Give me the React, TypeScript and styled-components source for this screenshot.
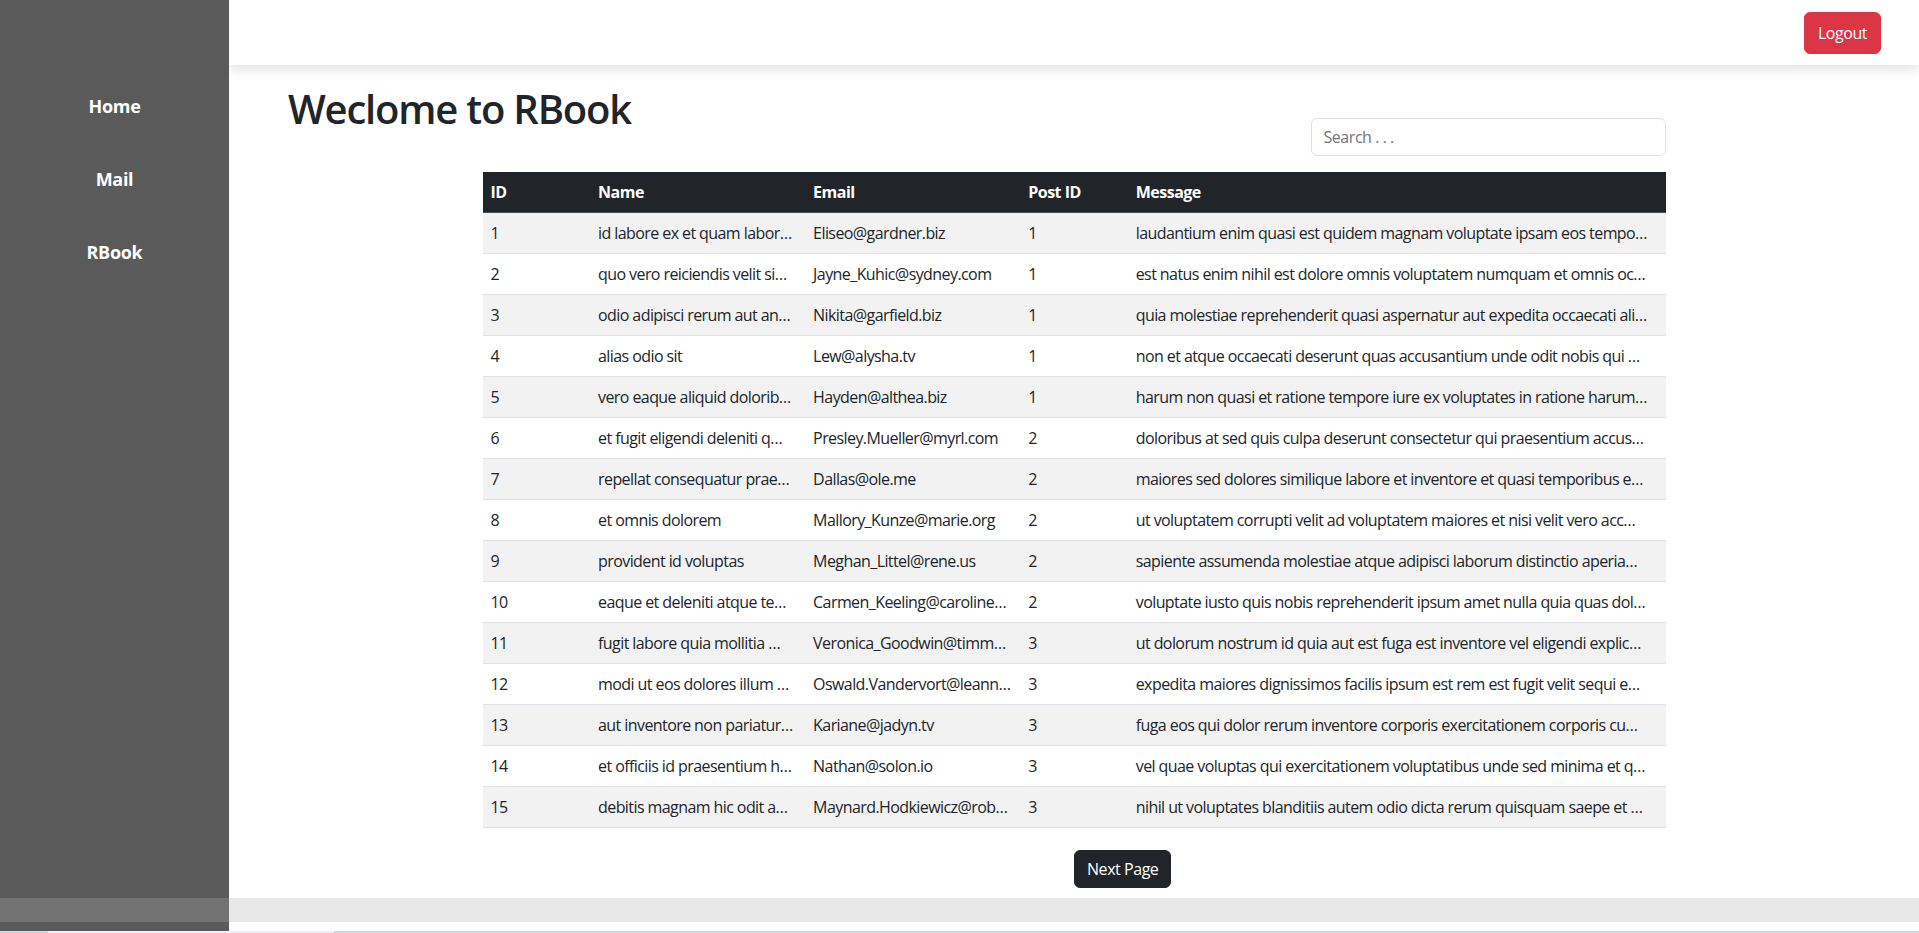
import React from "react";
import styled, { createGlobalStyle } from "styled-components";

const GlobalStyle = createGlobalStyle`
  html, body {
    margin: 0;
    padding: 0;
    height: 100%;
    overflow: hidden;
  }
  body {
    font-family: "Open Sans", "Noto Sans", sans-serif;
    font-size: 16px;
    line-height: 1.5;
    letter-spacing: -0.5px;
    color: #212529;
    background: #ffffff;
  }
  * {
    box-sizing: border-box;
  }
`;

const SIDEBAR = 229;

const Page = styled.div`
  display: flex;
  flex-direction: column;
  height: 933px;
`;

const Body = styled.div`
  display: flex;
  height: 898px;
`;

const Sidebar = styled.nav`
  width: ${SIDEBAR}px;
  flex-shrink: 0;
  background: #5a5a5a;
  display: flex;
  flex-direction: column;
  padding-top: 70px;
  position: relative;
  z-index: 2;
`;

const NavItem = styled.a`
  display: block;
  text-align: center;
  color: #ffffff;
  font-weight: 700;
  font-size: 18px;
  line-height: 25px;
  letter-spacing: -0.3px;
  padding: 24px 0;
  text-decoration: none;
  cursor: pointer;
`;

const Main = styled.main`
  flex: 1;
  display: flex;
  flex-direction: column;
  min-width: 0;
`;

const Header = styled.header`
  height: 65px;
  flex-shrink: 0;
  display: flex;
  align-items: center;
  justify-content: flex-end;
  padding-right: 38px;
  background: #ffffff;
  box-shadow: 0 4px 12px rgba(0, 0, 0, 0.12);
  position: relative;
  z-index: 1;
`;

const Button = styled.button<{ $variant: "danger" | "dark" }>`
  font-family: inherit;
  font-size: 16px;
  line-height: 24px;
  letter-spacing: -0.45px;
  color: #ffffff;
  background: ${({ $variant }) => ($variant === "danger" ? "#dc3545" : "#212529")};
  border: 1px solid ${({ $variant }) => ($variant === "danger" ? "#dc3545" : "#212529")};
  border-radius: 6px;
  padding: ${({ $variant }) => ($variant === "danger" ? "8px 13px" : "6px 12px")};
  cursor: pointer;
`;

const TitleRow = styled.div`
  display: flex;
  justify-content: space-between;
  align-items: flex-start;
  margin-top: 20px;
  padding: 0 15% 0 59px;
`;

const Title = styled.h1`
  margin: 0;
  font-size: 40px;
  font-weight: 600;
  line-height: 48px;
  letter-spacing: -1.2px;
`;

const SearchInput = styled.input`
  width: 355px;
  height: 38px;
  margin-top: 33px;
  padding: 6px 12px;
  font-family: inherit;
  font-size: 16px;
  letter-spacing: -0.45px;
  color: #212529;
  border: 1px solid #dee2e6;
  border-radius: 6px;
  outline: none;

  &::placeholder {
    color: #6c757d;
  }
`;

const TableWrap = styled.div`
  width: 70%;
  margin: 16px auto 0;
`;

const Table = styled.table`
  width: 100%;
  table-layout: fixed;
  border-collapse: collapse;
`;

const Th = styled.th`
  background: #212529;
  color: #ffffff;
  text-align: left;
  font-weight: 700;
  padding: 8px;
  line-height: 24px;
  border-bottom: 1px solid #4b5055;
`;

const Row = styled.tr<{ $striped: boolean }>`
  background: ${({ $striped }) => ($striped ? "#f2f2f2" : "#ffffff")};
  border-bottom: 1px solid #dee2e6;
`;

const Td = styled.td`
  padding: 8px;
  line-height: 24px;
  letter-spacing: -0.58px;
  white-space: nowrap;
  overflow: hidden;
  text-overflow: ellipsis;
`;

const Pager = styled.div`
  margin-top: 22px;
  padding-left: 50%;
`;

const Strip = styled.div<{ $height: number; $side: string; $main: string }>`
  display: grid;
  grid-template-columns: ${SIDEBAR}px 1fr;
  height: ${({ $height }) => $height}px;
  flex-shrink: 0;

  & > :first-child {
    background: ${({ $side }) => $side};
  }
  & > :last-child {
    background: ${({ $main }) => $main};
  }
`;

const Scrollbar = styled.div`
  height: 2px;
  background: #d3d4db;
  flex-shrink: 0;
  display: flex;
`;

const Thumb = styled.div`
  margin-left: 48px;
  width: 286px;
  background: #f0f0f3;
`;

type Comment = { id: number; name: string; email: string; postId: number; body: string };

const comments: Comment[] = [
  { id: 1, name: "id labore ex et quam labor…", email: "Eliseo@gardner.biz", postId: 1, body: "laudantium enim quasi est quidem magnam voluptate ipsam eos tempo…" },
  { id: 2, name: "quo vero reiciendis velit si…", email: "Jayne_Kuhic@sydney.com", postId: 1, body: "est natus enim nihil est dolore omnis voluptatem numquam et omnis oc…" },
  { id: 3, name: "odio adipisci rerum aut an…", email: "Nikita@garfield.biz", postId: 1, body: "quia molestiae reprehenderit quasi aspernatur aut expedita occaecati ali…" },
  { id: 4, name: "alias odio sit", email: "Lew@alysha.tv", postId: 1, body: "non et atque occaecati deserunt quas accusantium unde odit nobis qui …" },
  { id: 5, name: "vero eaque aliquid dolorib…", email: "Hayden@althea.biz", postId: 1, body: "harum non quasi et ratione tempore iure ex voluptates in ratione harum…" },
  { id: 6, name: "et fugit eligendi deleniti q…", email: "Presley.Mueller@myrl.com", postId: 2, body: "doloribus at sed quis culpa deserunt consectetur qui praesentium accus…" },
  { id: 7, name: "repellat consequatur prae…", email: "Dallas@ole.me", postId: 2, body: "maiores sed dolores similique labore et inventore et quasi temporibus e…" },
  { id: 8, name: "et omnis dolorem", email: "Mallory_Kunze@marie.org", postId: 2, body: "ut voluptatem corrupti velit ad voluptatem maiores et nisi velit vero acc…" },
  { id: 9, name: "provident id voluptas", email: "Meghan_Littel@rene.us", postId: 2, body: "sapiente assumenda molestiae atque adipisci laborum distinctio aperia…" },
  { id: 10, name: "eaque et deleniti atque te…", email: "Carmen_Keeling@caroline…", postId: 2, body: "voluptate iusto quis nobis reprehenderit ipsum amet nulla quia quas dol…" },
  { id: 11, name: "fugit labore quia mollitia …", email: "Veronica_Goodwin@timm…", postId: 3, body: "ut dolorum nostrum id quia aut est fuga est inventore vel eligendi explic…" },
  { id: 12, name: "modi ut eos dolores illum …", email: "Oswald.Vandervort@leann…", postId: 3, body: "expedita maiores dignissimos facilis ipsum est rem est fugit velit sequi e…" },
  { id: 13, name: "aut inventore non pariatur…", email: "Kariane@jadyn.tv", postId: 3, body: "fuga eos qui dolor rerum inventore corporis exercitationem corporis cu…" },
  { id: 14, name: "et officiis id praesentium h…", email: "Nathan@solon.io", postId: 3, body: "vel quae voluptas qui exercitationem voluptatibus unde sed minima et q…" },
  { id: 15, name: "debitis magnam hic odit a…", email: "Maynard.Hodkiewicz@rob…", postId: 3, body: "nihil ut voluptates blanditiis autem odio dicta rerum quisquam saepe et …" },
];

const columns = [
  { label: "ID", width: 1 },
  { label: "Name", width: 2 },
  { label: "Email", width: 2 },
  { label: "Post ID", width: 1 },
  { label: "Message", width: 5 },
];

export default function App() {
  return (
    <>
      <GlobalStyle />
      <Page>
        <Body>
          <Sidebar>
            <NavItem>Home</NavItem>
            <NavItem>Mail</NavItem>
            <NavItem>RBook</NavItem>
          </Sidebar>
          <Main>
            <Header>
              <Button $variant="danger">Logout</Button>
            </Header>
            <TitleRow>
              <Title>Weclome to RBook</Title>
              <SearchInput placeholder="Search . . ." />
            </TitleRow>
            <TableWrap>
              <Table>
                <colgroup>
                  {columns.map((c) => (
                    <col key={c.label} style={{ width: `${(c.width / 11) * 100}%` }} />
                  ))}
                </colgroup>
                <thead>
                  <tr>
                    {columns.map((c) => (
                      <Th key={c.label}>{c.label}</Th>
                    ))}
                  </tr>
                </thead>
                <tbody>
                  {comments.map((c, i) => (
                    <Row key={c.id} $striped={i % 2 === 0}>
                      <Td>{c.id}</Td>
                      <Td>{c.name}</Td>
                      <Td>{c.email}</Td>
                      <Td>{c.postId}</Td>
                      <Td>{c.body}</Td>
                    </Row>
                  ))}
                </tbody>
              </Table>
            </TableWrap>
            <Pager>
              <Button $variant="dark">Next Page</Button>
            </Pager>
          </Main>
        </Body>
        <Strip $height={24} $side="#737373" $main="#e8e8e8">
          <div />
          <div />
        </Strip>
        <Strip $height={9} $side="#5a5a5a" $main="#ffffff">
          <div />
          <div />
        </Strip>
        <Scrollbar>
          <Thumb />
        </Scrollbar>
      </Page>
    </>
  );
}
